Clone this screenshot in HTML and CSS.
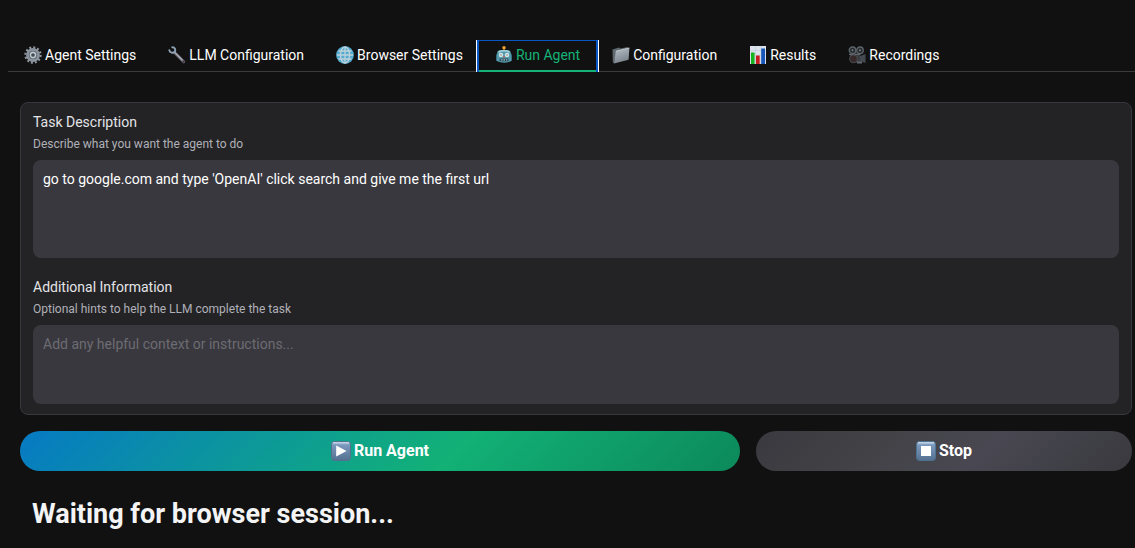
FILE: index.html
```
<!DOCTYPE html>
<html lang="en">
<head>
<meta charset="utf-8">
<meta name="viewport" content="width=device-width, initial-scale=1">
<title>Run Agent</title>
<link rel="stylesheet" href="styles.css">
</head>
<body>
<nav class="tabs" role="tablist">
  <button class="tab" role="tab" type="button">
    <svg class="icon" viewBox="0 0 18 18" aria-hidden="true"><circle cx="9" cy="9" r="7.6" fill="none" stroke="#8d959d" stroke-width="2.2" stroke-dasharray="2 1.98"/><circle cx="9" cy="9" r="5.4" fill="none" stroke="#8b949e" stroke-width="3"/><circle cx="9" cy="9" r="4.3" fill="#6c757e"/><circle cx="9" cy="9" r="2.5" fill="#414850" stroke="#c3cbd3" stroke-width="1.3"/></svg>
    <span>Agent Settings</span>
  </button>
  <button class="tab" role="tab" type="button">
    <svg class="icon" viewBox="0 0 18 18" aria-hidden="true"><path d="M6.5 6.5L15.7 15.8" stroke="#69636b" stroke-width="3" stroke-linecap="round"/><path d="M6.3 5.9L14.5 14.2" stroke="#a9b2bd" stroke-width="1.3"/><path d="M4.3 1.2C6.8 1.2 8 3.5 6.8 5.800C5 7.500 2 6.800 1.300 4.200" fill="none" stroke="#8fa3b8" stroke-width="1.900" stroke-linecap="round"/><circle cx="15.600" cy="15.700" r=".7" fill="#231f22"/></svg>
    <span>LLM Configuration</span>
  </button>
  <button class="tab" role="tab" type="button">
    <svg class="icon" viewBox="0 0 18 18" aria-hidden="true"><circle cx="9" cy="9" r="8.900" fill="#55abce"/><g fill="none" stroke="#bdd2dc" stroke-width="1.300"><path d="M9 1v16M1 9h16M2.500 5h13M2.500 13h13"/><ellipse cx="9" cy="9" rx="4.500" ry="8"/></g></svg>
    <span>Browser Settings</span>
  </button>
  <button class="tab tab-active" role="tab" type="button" aria-selected="true">
    <svg class="icon" viewBox="0 0 18 18" aria-hidden="true"><path d="M9 3v2" stroke="#9c5f36" stroke-width="1.500"/><circle cx="9" cy="1.800" r="1.700" fill="#f2a62c"/><rect x="1" y="8" width="3" height="7" rx="1.200" fill="#2c6b80"/><rect x="14" y="8" width="3" height="7" rx="1.200" fill="#2c6b80"/><path d="M2 7Q2.500 4 6 4h6q3.500 0 4 3l.3 8Q9 18.500 1.700 15z" fill="#5799aa"/><path d="M3.500 6Q9 3.500 14.500 6" fill="none" stroke="#a8d5dc" stroke-width="1.500"/><circle cx="6" cy="9" r="2.200" fill="#c9eef1"/><circle cx="12" cy="9" r="2.200" fill="#c9eef1"/><circle cx="6" cy="9" r=".7" fill="#c05049"/><circle cx="12" cy="9" r=".7" fill="#c05049"/><path d="M9 9.500l-1.200 2h2.400z" fill="#d85343"/><rect x="4.500" y="12.600" width="9" height="2.600" rx="1" fill="#294e5a"/><path d="M6 13.900h1.500m1 0h1.500m1 0h1.200" stroke="#c2dde0" stroke-width="1"/></svg>
    <span>Run Agent</span>
  </button>
  <button class="tab" role="tab" type="button">
    <svg class="icon" viewBox="0 0 18 18" aria-hidden="true"><defs><linearGradient id="folder" x1="0" y1="0" x2=".4" y2="1"><stop stop-color="#b7bfc7"/><stop offset="1" stop-color="#7b848d"/></linearGradient></defs><path d="M.5 3.500L7 1.500l1.500 1L16 1v4L4 8 2 17.500.8 16z" fill="#606970"/><path d="M3.800 5.200L17.400 2l-.8 11.800L2 17.500z" fill="url(#folder)"/><path d="M3.800 5.200L17.400 2" stroke="#d2d8dc" stroke-width=".8"/></svg>
    <span>Configuration</span>
  </button>
  <button class="tab" role="tab" type="button">
    <svg class="icon" viewBox="0 0 18 18" aria-hidden="true"><rect x="1" width="16" height="18" fill="#dce3ed"/><path d="M1 4.500h16M1 9h16M1 13.500h16M6.500 0v18M12 0v18" stroke="#bdc9d7" stroke-width=".5"/><path d="M2 6.500h3.600V18H2z" fill="#14b321"/><path d="M7 9.500h3.700V18H7z" fill="#c51a20"/><path d="M12.200 2.500H16V18h-3.800z" fill="#1656b9"/></svg>
    <span>Results</span>
  </button>
  <button class="tab" role="tab" type="button">
    <svg class="icon" viewBox="0 0 18 18" aria-hidden="true"><path d="M2 8.500h10v7.500L4 17 2 15z" fill="#383c40"/><circle cx="4.500" cy="4.300" r="3.300" fill="#262a2e" stroke="#5e666c" stroke-width="1.300"/><circle cx="12" cy="4.300" r="3.300" fill="#262a2e" stroke="#5e666c" stroke-width="1.300"/><circle cx="4.500" cy="4.300" r="1" fill="#788087"/><circle cx="12" cy="4.300" r="1" fill="#788087"/><path d="M1 8.300h11.500" stroke="#626a70" stroke-width="1.300"/><path d="M12 10l5.500-2v9L12 15.200z" fill="#444a4f"/><circle cx="5.500" cy="12.800" r="4" fill="#37282a" stroke="#50555a" stroke-width=".8"/><path d="M9 15.500h5v2H9z" fill="#646c73"/></svg>
    <span>Recordings</span>
  </button>
</nav>
<main class="content">
  <section class="panel">
    <div class="field">
      <label class="label" for="task">Task Description</label>
      <p class="hint" id="task-hint">Describe what you want the agent to do</p>
      <textarea class="box box-tall" id="task" aria-describedby="task-hint">go to google.com and type 'OpenAI' click search and give me the first url</textarea>
    </div>
    <div class="field">
      <label class="label" for="extra">Additional Information</label>
      <p class="hint" id="extra-hint">Optional hints to help the LLM complete the task</p>
      <textarea class="box" id="extra" aria-describedby="extra-hint" placeholder="Add any helpful context or instructions..."></textarea>
    </div>
  </section>
  <div class="actions">
    <button class="action run" type="button">
      <svg class="action-icon" viewBox="0 0 20 20" aria-hidden="true"><defs><linearGradient id="key" x2="0" y2="1"><stop stop-color="#a9bfda"/><stop offset=".2" stop-color="#7a98bd"/><stop offset="1" stop-color="#55708f"/></linearGradient></defs><rect x=".5" y=".5" width="19" height="19" rx="3" fill="url(#key)" stroke="#52718f"/><path d="M2.500 1.800h15" stroke="#c0d0e4" stroke-width="1.400" stroke-linecap="round"/><path d="M5.200 4.400L15.600 10 5.200 15.600z" fill="#fff"/></svg>
      <span>Run Agent</span>
    </button>
    <button class="action stop" type="button">
      <svg class="action-icon" viewBox="0 0 20 20" aria-hidden="true"><rect x=".5" y=".5" width="19" height="19" rx="3" fill="url(#key)" stroke="#4d7190"/><path d="M2.500 1.800h15" stroke="#c0d0e4" stroke-width="1.400" stroke-linecap="round"/><path d="M5 5h10v10H5z" fill="#fff"/></svg>
      <span>Stop</span>
    </button>
  </div>
  <h1 class="status">Waiting for browser session...</h1>
</main>
</body>
</html>
```
FILE: styles.css
```
* { box-sizing: border-box; }
body {
  margin: 0;
  padding: 40px 0 0 8px;
  background: #111111;
  color: #f4f4f5;
  font-family: Roboto, "Noto Sans", sans-serif;
}
button, textarea { font-family: inherit; }
.tabs {
  display: flex;
  height: 32px;
  border-bottom: 1px solid #3b3b3f;
}
.tab {
  display: flex;
  align-items: center;
  gap: 3px;
  height: 32px;
  padding: 0 16px 1px;
  border: 0;
  border-top: 1px solid transparent;
  border-bottom: 2px solid transparent;
  background: none;
  color: #ffffff;
  font-size: 14px;
  line-height: 20px;
  white-space: nowrap;
}
.icon { width: 18px; height: 18px; flex: none; }
.tab-active {
  color: #15b377;
  border-top-color: #0757c8;
  border-bottom-color: #15b377;
  box-shadow: -2px 0 #0757c8, 2px 0 #0757c8, -3px 0 #ffffff, 3px 0 #ffffff;
}
.content { padding: 30px 3px 0 12px; }
.panel {
  display: flex;
  flex-direction: column;
  gap: 19px;
  padding: 9px 12px 10px;
  border: 1px solid #37373c;
  border-radius: 8px;
  background: #232325;
}
.field { display: flex; flex-direction: column; }
.label { font-size: 14px; line-height: 20px; color: #e4e4e7; }
.hint { margin: 4px 0 8px; font-size: 12px; line-height: 16px; color: #b0b0b8; }
.box {
  display: block;
  width: 100%;
  height: 79px;
  padding: 9px 10px;
  border: 0;
  border-radius: 8px;
  background: #39383e;
  color: #ffffff;
  font-size: 14px;
  line-height: 20px;
  resize: none;
  outline: none;
}
.box-tall { height: 98px; }
.box::placeholder { color: #6c6c73; opacity: 1; }
.actions { display: flex; gap: 16px; margin-top: 16px; }
.action {
  display: flex;
  align-items: center;
  justify-content: center;
  gap: 3px;
  height: 40px;
  padding: 0;
  border: 0;
  border-radius: 20px;
  color: #ffffff;
  font-size: 16px;
  line-height: 24px;
  font-weight: 700;
}
.action-icon { width: 20px; height: 20px; }
.run { flex: 720; background: linear-gradient(135deg, #067ac4, #12b176 60%, #0c895b); }
.stop { flex: 376; background: linear-gradient(135deg, #3a393f, #424246 30%, #494852 60%, #39393e); }
.status { margin: 24px 12px 0; font-size: 27px; line-height: 38px; font-weight: 700; }
```
